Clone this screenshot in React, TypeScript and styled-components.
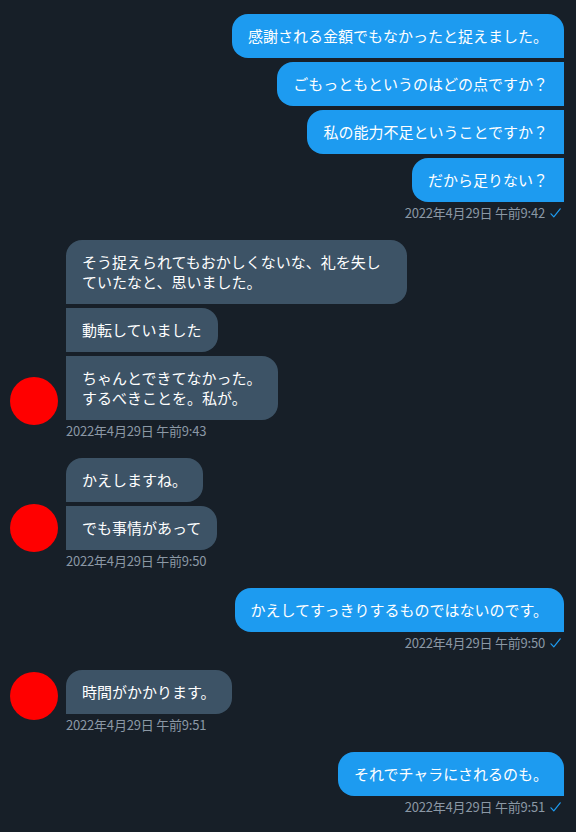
import styled, { createGlobalStyle, css } from 'styled-components';

type Side = 'me' | 'them';
type Pos = 'single' | 'first' | 'middle' | 'last';

interface InGroup {
    side: Side;
    messages: string[];
    time: string;
    avatarDrop?: number;
}

const groups: InGroup[] = [
    {
        side: 'me',
        messages: [
            '感謝される金額でもなかったと捉えました。',
            'ごもっともというのはどの点ですか？',
            '私の能力不足ということですか？',
            'だから足りない？',
        ],
        time: '2022年4月29日 午前9:42',
    },
    {
        side: 'them',
        messages: [
            'そう捉えられてもおかしくないな、礼を失していたなと、思いました。',
            '動転していました',
            'ちゃんとできてなかった。\nするべきことを。私が。',
        ],
        time: '2022年4月29日 午前9:43',
        avatarDrop: 5,
    },
    {
        side: 'them',
        messages: ['かえしますね。', 'でも事情があって'],
        time: '2022年4月29日 午前9:50',
        avatarDrop: 2,
    },
    {
        side: 'me',
        messages: ['かえしてすっきりするものではないのです。'],
        time: '2022年4月29日 午前9:50',
    },
    {
        side: 'them',
        messages: ['時間がかかります。'],
        time: '2022年4月29日 午前9:51',
        avatarDrop: 6,
    },
    {
        side: 'me',
        messages: ['それでチャラにされるのも。'],
        time: '2022年4月29日 午前9:51',
    },
];

const posOf = (i: number, n: number): Pos => {
    if (n === 1) return 'single';
    if (i === 0) return 'first';
    if (i === n - 1) return 'last';
    return 'middle';
};

const Check = () => (
    <svg width="11" height="10" viewBox="0 0 11 10" fill="none">
        <polyline points="1,5.8 3.8,8.8 10.2,0.8" stroke="#1d9bf0" strokeWidth="1.2" strokeLinecap="round" strokeLinejoin="round" />
    </svg>
);

const App = () => {
    return (
        <>
            <GlobalStyle />
            <Thread>
                {groups.map((g, gi) =>
                    g.side === 'me' ? (
                        <MyGroup key={gi}>
                            {g.messages.map((m, i) => (
                                <Bubble key={i} side="me" pos={posOf(i, g.messages.length)}>
                                    {m}
                                </Bubble>
                            ))}
                            <Meta side="me">
                                {g.time}
                                <Check />
                            </Meta>
                        </MyGroup>
                    ) : (
                        <TheirGroup key={gi}>
                            <Avatar drop={g.avatarDrop ?? 0} />
                            <Stack>
                                {g.messages.map((m, i) => (
                                    <Bubble key={i} side="them" pos={posOf(i, g.messages.length)}>
                                        {m}
                                    </Bubble>
                                ))}
                            </Stack>
                            <Meta side="them">{g.time}</Meta>
                        </TheirGroup>
                    )
                )}
            </Thread>
        </>
    );
};

export default App;

const GlobalStyle = createGlobalStyle`
    html, body {
        margin: 0;
        padding: 0;
        background: #171f28;
    }
    body {
        font-family: "Noto Sans CJK JP", "Noto Sans", sans-serif;
        color: #f7f9f9;
    }
`;

const Thread = styled.div`
    width: 576px;
    min-height: 832px;
    box-sizing: border-box;
    padding: 14px 12px 12px 10px;
    display: flex;
    flex-direction: column;
    gap: 19px;
`;

const MyGroup = styled.div`
    display: flex;
    flex-direction: column;
    align-items: flex-end;
    gap: 4px;
`;

const TheirGroup = styled.div`
    display: grid;
    grid-template-columns: 48px 1fr;
    column-gap: 8px;
    row-gap: 3px;
`;

const Stack = styled.div`
    grid-column: 2;
    grid-row: 1;
    display: flex;
    flex-direction: column;
    align-items: flex-start;
    gap: 4px;
`;

const Avatar = styled.div<{ drop: number }>`
    grid-column: 1;
    grid-row: 1;
    align-self: end;
    width: 48px;
    height: 48px;
    border-radius: 50%;
    background: #ff0000;
    margin-bottom: ${(p) => -p.drop}px;
`;

const corners = (side: Side, pos: Pos) => {
    const r = '16px';
    if (side === 'me') {
        if (pos === 'single' || pos === 'first') return `${r} ${r} 0 ${r}`;
        return `${r} 0 0 ${r}`;
    }
    if (pos === 'single' || pos === 'first') return `${r} ${r} ${r} 0`;
    return `0 ${r} ${r} 0`;
};

const Bubble = styled.div<{ side: Side; pos: Pos }>`
    box-sizing: border-box;
    max-width: 341px;
    padding: 12px 16px;
    font-size: 15px;
    line-height: 20px;
    white-space: pre-line;
    color: #ffffff;
    border-radius: ${(p) => corners(p.side, p.pos)};
    ${(p) =>
        p.side === 'me'
            ? css`
                  background: #1d9bf0;
              `
            : css`
                  background: #3d5366;
              `}
`;

const Meta = styled.div<{ side: Side }>`
    display: flex;
    align-items: center;
    gap: 5px;
    height: 16px;
    font-size: 13px;
    line-height: 16px;
    letter-spacing: -0.2px;
    color: #8b98a5;
    ${(p) =>
        p.side === 'me'
            ? css`
                  margin-top: -1px;
                  padding-right: 3px;
              `
            : css`
                  grid-column: 2;
                  grid-row: 2;
              `}
`;
